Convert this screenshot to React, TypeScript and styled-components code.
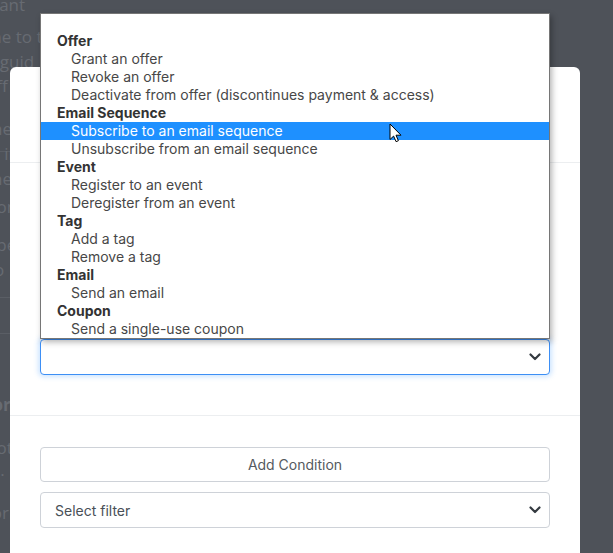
import styled, { createGlobalStyle } from 'styled-components';

const GlobalStyle = createGlobalStyle`
    html, body {
        margin: 0;
        padding: 0;
        background: #4e5259;
        font-family: Inter, "Noto Sans", sans-serif;
    }
`;

const Screen = styled.div`
    position: relative;
    width: 613px;
    height: 553px;
    overflow: hidden;
    background: #4e5259;
`;

const BgPage = styled.div`
    display: flex;
    flex-direction: column;
    width: 580px;
    margin-left: -14px;
    color: #676b72;
    font-family: "Open Sans", sans-serif;
    font-size: 17px;
`;

const BgLine = styled.div<{ $top: number; $bold?: boolean }>`
    margin-top: ${(p) => p.$top}px;
    line-height: 22px;
    white-space: nowrap;
    font-weight: ${(p) => (p.$bold ? 700 : 400)};
`;

const BgRule = styled.div<{ $top: number }>`
    margin-top: ${(p) => p.$top}px;
    height: 1px;
    background: #5a5e65;
`;

const Modal = styled.div`
    position: absolute;
    left: 10px;
    top: 67px;
    width: 570px;
    height: 520px;
    background: #fff;
    border-radius: 6px;
    display: flex;
    flex-direction: column;
`;

const ModalHeader = styled.div`
    height: 95px;
    border-bottom: 1px solid #eceef0;
`;

const ModalBody = styled.div`
    padding: 176px 30px 40px;
`;

const ModalFooter = styled.div`
    border-top: 1px solid #eceef0;
    padding: 31px 30px;
    display: flex;
    flex-direction: column;
    gap: 10px;
`;

const SelectBox = styled.div<{ $focused?: boolean }>`
    height: 36px;
    box-sizing: border-box;
    display: flex;
    align-items: center;
    justify-content: space-between;
    padding: 0 8px 0 14px;
    border: 1px solid ${(p) => (p.$focused ? '#3d8ff5' : '#ced2d8')};
    border-radius: 4px;
    box-shadow: ${(p) => (p.$focused ? '0 0 5px 2px rgba(80, 160, 255, 0.28)' : 'none')};
    color: #495057;
    font-size: 14px;
    background: #fff;
`;

const OutlineButton = styled.div`
    height: 35px;
    box-sizing: border-box;
    display: flex;
    align-items: center;
    justify-content: center;
    border: 1px solid #ced2d8;
    border-radius: 4px;
    color: #555a60;
    font-size: 14px;
    background: #fff;
`;

const Listbox = styled.div`
    position: absolute;
    left: 40px;
    top: 13px;
    width: 510px;
    height: 326px;
    box-sizing: border-box;
    background: #fff;
    border: 1px solid #767676;
    box-shadow: 2px 3px 6px rgba(0, 0, 0, 0.3);
    display: flex;
    flex-direction: column;
`;

const OptRow = styled.div<{ $group?: boolean; $active?: boolean }>`
    height: 18px;
    line-height: 18px;
    font-size: 14px;
    padding-left: ${(p) => (p.$group ? 16 : 30)}px;
    font-weight: ${(p) => (p.$group ? 700 : 400)};
    color: ${(p) => (p.$active ? '#fff' : p.$group ? '#333' : '#474747')};
    background: ${(p) => (p.$active ? '#1e90ff' : 'transparent')};
    white-space: nowrap;
`;

const Cursor = styled.svg`
    position: absolute;
    left: 389px;
    top: 123px;
`;

const Chevron = () => (
    <svg width="12" height="8" viewBox="0 0 12 8">
        <path d="M1.5 1.5 6 6l4.5-4.5" fill="none" stroke="#343a40" strokeWidth="2.2" strokeLinecap="round" strokeLinejoin="round" />
    </svg>
);

const groups: { label: string; options: string[] }[] = [
    { label: 'Offer', options: ['Grant an offer', 'Revoke an offer', 'Deactivate from offer (discontinues payment & access)'] },
    { label: 'Email Sequence', options: ['Subscribe to an email sequence', 'Unsubscribe from an email sequence'] },
    { label: 'Event', options: ['Register to an event', 'Deregister from an event'] },
    { label: 'Tag', options: ['Add a tag', 'Remove a tag'] },
    { label: 'Email', options: ['Send an email'] },
    { label: 'Coupon', options: ['Send a single-use coupon'] },
];

export default function App() {
    return (
        <Screen>
            <GlobalStyle />
            <BgPage>
                <BgLine $top={-6}>want</BgLine>
                <BgLine $top={10}>me to th</BgLine>
                <BgLine $top={3}>a guid</BgLine>
                <BgLine $top={2}>off</BgLine>
                <BgLine $top={21}>their</BgLine>
                <BgRule $top={11} />
                <BgLine $top={-9}>ai in</BgLine>
                <BgLine $top={3}>the</BgLine>
                <BgLine $top={6}>bon</BgLine>
                <BgLine $top={16}>ope</BgLine>
                <BgLine $top={3}>so</BgLine>
                <BgRule $top={16} />
                <BgRule $top={35} />
                <BgLine $top={60} $bold>for</BgLine>
                <BgLine $top={21}>not</BgLine>
                <BgLine $top={0}>ts.</BgLine>
                <BgLine $top={21}>for</BgLine>
            </BgPage>

            <Modal>
                <ModalHeader />
                <ModalBody>
                    <SelectBox $focused>
                        <span />
                        <Chevron />
                    </SelectBox>
                </ModalBody>
                <ModalFooter>
                    <OutlineButton>Add Condition</OutlineButton>
                    <SelectBox>
                        <span>Select filter</span>
                        <Chevron />
                    </SelectBox>
                </ModalFooter>
            </Modal>

            <Listbox>
                <OptRow />
                {groups.map((g) => (
                    <div key={g.label}>
                        <OptRow $group>{g.label}</OptRow>
                        {g.options.map((o) => (
                            <OptRow key={o} $active={o === 'Subscribe to an email sequence'}>
                                {o}
                            </OptRow>
                        ))}
                    </div>
                ))}
            </Listbox>

            <Cursor width="13" height="20" viewBox="0 0 13 20">
                <path d="M1 1v15.5l3.6-3.4 2.5 5.6 2.3-1-2.4-5.5H12z" fill="#fff" stroke="#000" strokeWidth="1" strokeLinejoin="round" />
            </Cursor>
        </Screen>
    );
}
